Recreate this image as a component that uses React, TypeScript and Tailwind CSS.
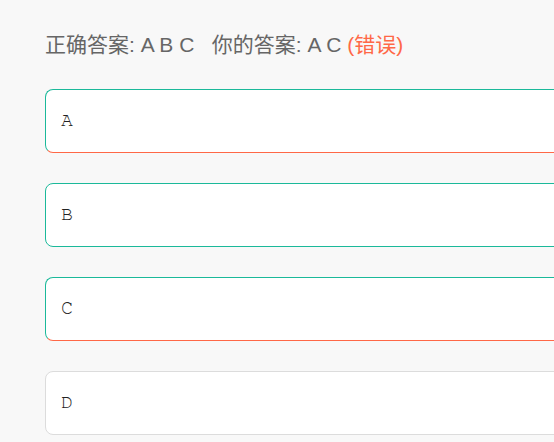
const options = [
  { label: 'A', state: 'wrong' },
  { label: 'B', state: 'right' },
  { label: 'C', state: 'wrong' },
  { label: 'D', state: 'none' },
];

function borderFor(state: string) {
  if (state === 'right') return 'border-[#1bb99a]';
  if (state === 'wrong') return 'border-t-[#1bb99a] border-l-[#1bb99a] border-b-[#ff6847] border-r-[#ff6847]';
  return 'border-[#dcdcdc]';
}

export default function App() {
  return (
    <div className="w-[554px] h-[442px] overflow-hidden bg-[#f8f8f8] font-['Liberation_Sans','Noto_Sans_CJK_SC',sans-serif]">
      <div className="pl-[45px] pt-[31px]">
        <p className="text-[21px] leading-[28px] text-[#666] whitespace-pre">
          正确答案: A B C   你的答案: A C <span className="text-[#ff6847]">(错误)</span>
        </p>
        <div className="mt-[30px] flex flex-col gap-[30px]">
          {options.map((o) => (
            <div
              key={o.label}
              className={`w-[560px] h-[64px] shrink-0 rounded-[8px] border bg-white flex items-center pl-[15px] ${borderFor(o.state)}`}
            >
              <span className="font-['Nimbus_Mono_PS','FreeMono','Courier_New',monospace] text-[20px] leading-[20px] text-[#222] -mt-[2px]">{o.label}</span>
            </div>
          ))}
        </div>
      </div>
    </div>
  );
}
